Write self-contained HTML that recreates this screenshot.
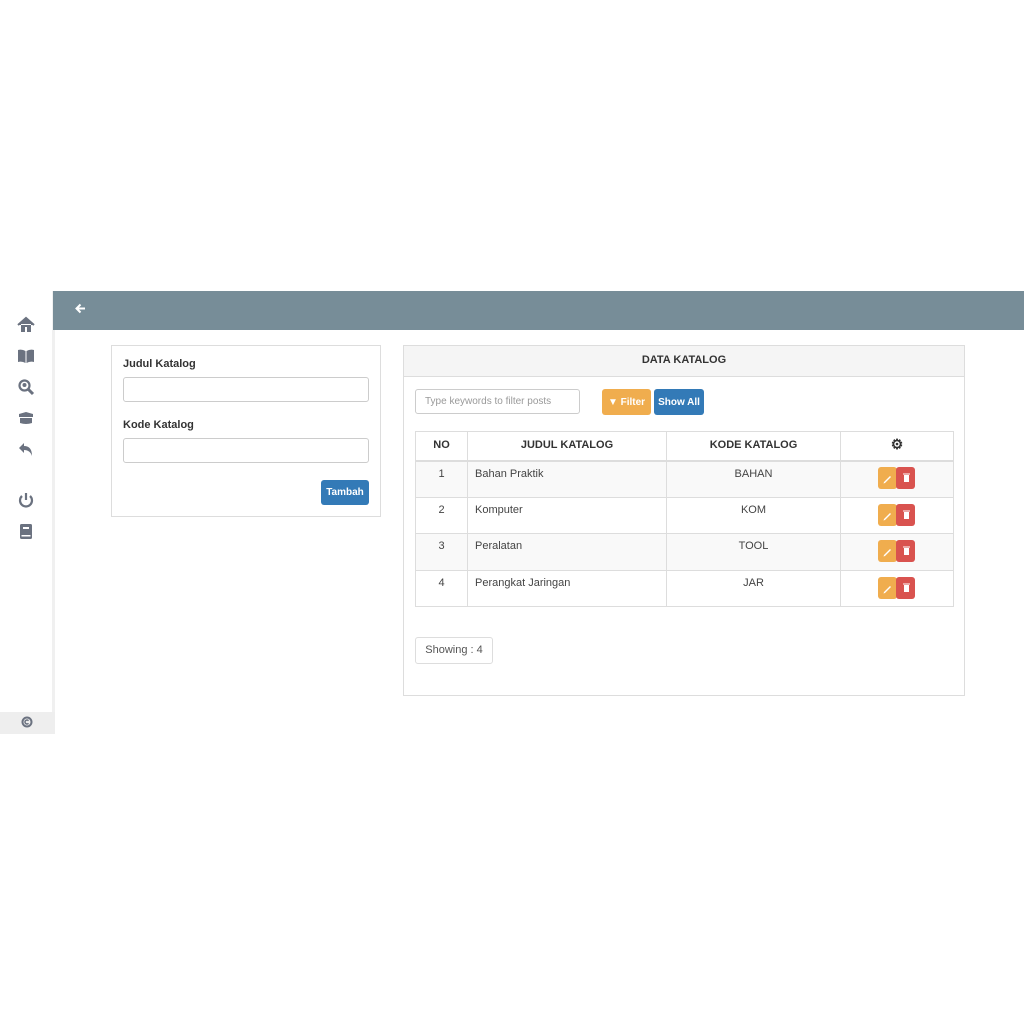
<!DOCTYPE html>
<html><head><meta charset="utf-8"><style>
*{box-sizing:border-box;margin:0;padding:0}
body{width:1024px;height:1024px;background:#fff;font-family:"Liberation Sans",sans-serif;color:#333;position:relative;overflow:hidden}
.abs{position:absolute}
.side{left:0;top:291px;width:55px;height:443px;background:#fff;border-right:3px solid #f0f0f0}
.foot{left:0;top:712px;width:55px;height:22px;background:#eee}
.hdr{left:53px;top:291px;width:971px;height:39px;background:#778d98}
.ic{position:absolute;left:17px;width:18px;height:18px}
.card{border:1px solid #ddd;background:#fff}
label{position:absolute;font-size:11px;font-weight:bold;color:#333}
.inp{position:absolute;border:1px solid #ccc;border-radius:3px;background:#fff}
.btn{position:absolute;color:#fff;font-size:10px;font-weight:bold;border-radius:3px;display:flex;align-items:center;justify-content:center}
table{position:absolute;left:415px;top:431px;width:539px;border-collapse:collapse;font-size:11px}
td,th{border:1px solid #ddd;height:36.5px;vertical-align:top;padding-top:6px}
th{height:29px;padding-top:7px;font-weight:bold;text-align:center}
thead tr{border-bottom:2px solid #ddd}
tbody tr:nth-child(odd){background:#f9f9f9}
td{color:#444}
.c{text-align:center}
.act{position:relative;height:36px}
.e{position:absolute;top:7px;width:19px;height:22px;border-radius:3px}
</style></head><body>
<div class="abs side"></div>
<div class="abs foot"></div>
<svg class="abs" style="left:21px;top:716px" width="12" height="12" viewBox="0 0 12 12"><circle cx="6" cy="6" r="4.5" fill="none" stroke="#6b7280" stroke-width="2"/><path d="M7.5 4.7A2 2 0 1 0 7.5 7.3" fill="none" stroke="#6b7280" stroke-width="1.5"/></svg>
<div class="abs hdr"></div>
<svg class="abs" style="left:74px;top:302px" width="13" height="13" viewBox="0 0 13 13"><path d="M11 6.5H3M6.5 2.5L2.5 6.5 6.5 10.5" stroke="#fff" stroke-width="2" fill="none"/></svg>
<svg class="ic" style="top:316px" viewBox="0 0 18 18"><path d="M1 9L9 2 17 9M4 8V16H8V11H10V16H14V8" fill="#6b7280"/><path d="M1 9L9 2 17 9" stroke="#6b7280" stroke-width="2" fill="none"/></svg>
<svg class="ic" style="top:347px" viewBox="0 0 18 18"><path d="M1 3Q5 2 8.5 4V16Q5 14 1 15ZM17 3Q13 2 9.5 4V16Q13 14 17 15Z" fill="#6b7280"/></svg>
<svg class="ic" style="top:378px" viewBox="0 0 18 18"><circle cx="7.5" cy="7.5" r="5" fill="none" stroke="#6b7280" stroke-width="2.2"/><circle cx="7.5" cy="7" r="2" fill="#6b7280"/><path d="M11 11L16 16" stroke="#6b7280" stroke-width="3"/></svg>
<svg class="ic" style="top:409px" viewBox="0 0 18 18"><path d="M2 5L9 3 16 5 16 8 9 8 2 8ZM3 9H15V14Q9 16 3 14Z" fill="#6b7280"/></svg>
<svg class="ic" style="top:440px" viewBox="0 0 18 18"><path d="M7 3L2 8 7 13V10Q13 10 15 16Q15 6 7 6Z" fill="#6b7280"/></svg>
<svg class="ic" style="top:491px" viewBox="0 0 18 18"><path d="M9 2V9" stroke="#6b7280" stroke-width="2.2"/><path d="M5 5A6 6 0 1 0 13 5" fill="none" stroke="#6b7280" stroke-width="2.2"/></svg>
<svg class="ic" style="top:522px" viewBox="0 0 18 18"><rect x="3" y="2" width="12" height="15" rx="1.5" fill="#6b7280"/><rect x="6" y="5" width="6" height="2" fill="#fff"/><rect x="4.5" y="13" width="9" height="1.5" fill="#fff"/></svg>
<div class="abs card" style="left:111px;top:345px;width:270px;height:172px"></div>
<label style="left:123px;top:358px">Judul Katalog</label>
<div class="inp" style="left:123px;top:377px;width:246px;height:25px"></div>
<label style="left:123px;top:419px">Kode Katalog</label>
<div class="inp" style="left:123px;top:438px;width:246px;height:25px"></div>
<div class="btn" style="left:321px;top:480px;width:48px;height:25px;background:#337ab7">Tambah</div>
<div class="abs card" style="left:403px;top:345px;width:562px;height:351px"></div>
<div class="abs" style="left:404px;top:346px;width:560px;height:31px;background:#f5f5f5;border-bottom:1px solid #ddd;font-size:11px;font-weight:bold;text-align:center;line-height:28px">DATA KATALOG</div>
<div class="inp" style="left:415px;top:389px;width:165px;height:25px;font-size:10px;color:#999;padding:6px 9px">Type keywords to filter posts</div>
<div class="btn" style="left:602px;top:389px;width:49px;height:26px;background:#f0ad4e">&#9660; Filter</div>
<div class="btn" style="left:654px;top:389px;width:50px;height:26px;background:#337ab7">Show All</div>
<table>
<thead><tr><th style="width:52px">NO</th><th style="width:199px">JUDUL KATALOG</th><th style="width:174px">KODE KATALOG</th><th style="font-size:14px;padding-top:4px">&#9881;</th></tr></thead>
<tbody>
<tr><td class="c">1</td><td style="padding-left:7px">Bahan Praktik</td><td class="c">BAHAN</td><td class="act"></td></tr>
<tr><td class="c">2</td><td style="padding-left:7px">Komputer</td><td class="c">KOM</td><td class="act"></td></tr>
<tr><td class="c">3</td><td style="padding-left:7px">Peralatan</td><td class="c">TOOL</td><td class="act"></td></tr>
<tr><td class="c">4</td><td style="padding-left:7px">Perangkat Jaringan</td><td class="c">JAR</td><td class="act"></td></tr>
</tbody></table>
<div class="abs" style="left:878px;top:467px">
 <div class="e" style="left:0;top:0;background:#f0ad4e"></div><div class="e" style="left:18px;top:0;background:#d9534f"></div>
 <div class="e" style="left:0;top:37px;background:#f0ad4e"></div><div class="e" style="left:18px;top:37px;background:#d9534f"></div>
 <div class="e" style="left:0;top:73px;background:#f0ad4e"></div><div class="e" style="left:18px;top:73px;background:#d9534f"></div>
 <div class="e" style="left:0;top:110px;background:#f0ad4e"></div><div class="e" style="left:18px;top:110px;background:#d9534f"></div>
</div>
<svg class="abs" style="left:878px;top:467px" width="40" height="135" viewBox="0 0 40 135">
<g fill="#fff">
<path d="M6 15L12 9 13 10 7 16 5.5 16.5Z"/><rect x="26" y="8" width="5" height="7"/><rect x="25" y="6.5" width="7" height="1"/>
<path d="M6 52L12 46 13 47 7 53 5.5 53.5Z"/><rect x="26" y="45" width="5" height="7"/><rect x="25" y="43.5" width="7" height="1"/>
<path d="M6 88L12 82 13 83 7 89 5.5 89.5Z"/><rect x="26" y="81" width="5" height="7"/><rect x="25" y="79.5" width="7" height="1"/>
<path d="M6 125L12 119 13 120 7 126 5.5 126.5Z"/><rect x="26" y="118" width="5" height="7"/><rect x="25" y="116.5" width="7" height="1"/>
</g></svg>
<div class="abs" style="left:415px;top:637px;width:78px;height:27px;border:1px solid #ddd;border-radius:3px;font-size:11px;color:#555;text-align:center;line-height:25px">Showing : 4</div>
</body></html>
